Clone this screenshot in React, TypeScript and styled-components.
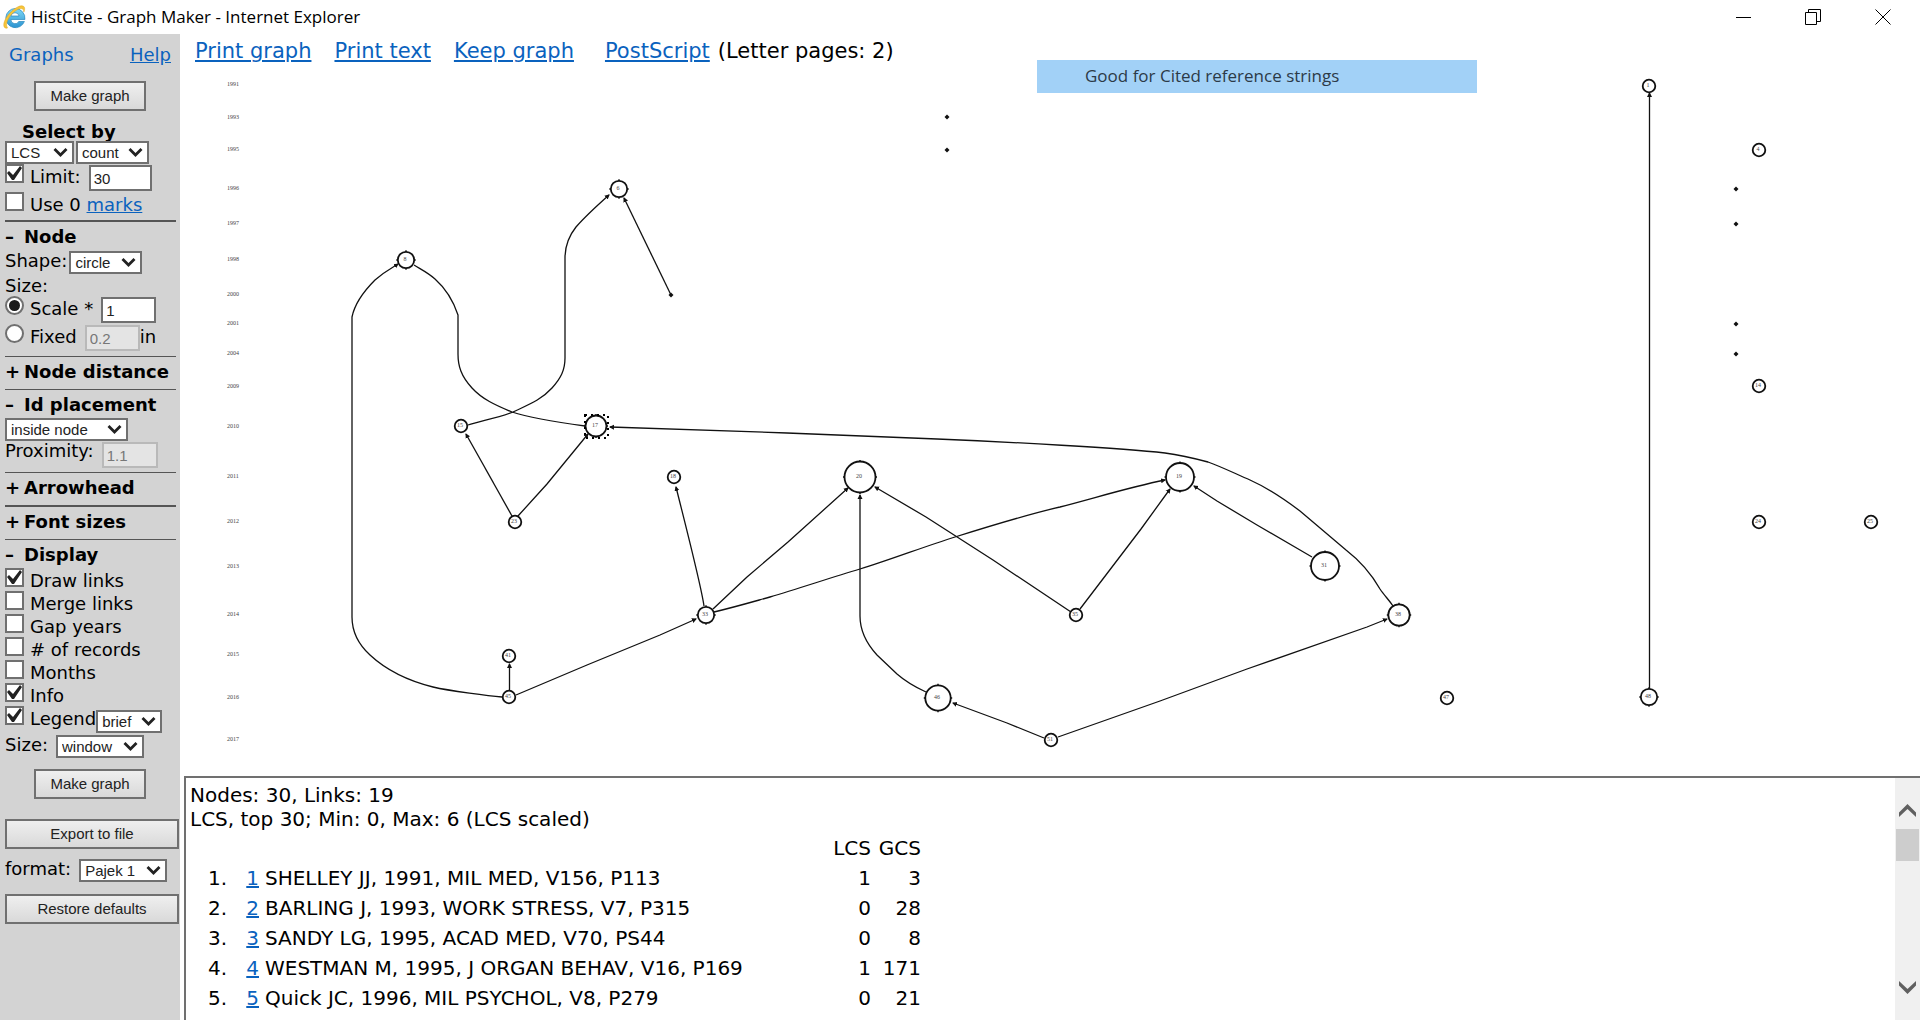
import React from "react";
import styled, { createGlobalStyle, css } from "styled-components";

const sans = `"DejaVu Sans", Verdana, sans-serif`;
const formFont = `"Liberation Sans", Arial, sans-serif`;
const chromeFont = `"Open Sans", "Segoe UI", sans-serif`;
const linkBlue = "#0a62be";
const edge = "#707070";

const GlobalStyle = createGlobalStyle`
  * { box-sizing: border-box; }
  body { margin: 0; background: #fff; color: #000; font-family: ${sans}; }
  a { color: ${linkBlue}; }
`;

const Window = styled.div`
  display: flex;
  flex-direction: column;
  height: 100vh;
  overflow: hidden;
`;

/* ---------- title bar ---------- */

const TitleBar = styled.header`
  display: flex;
  align-items: center;
  height: 34px;
  flex: none;
  padding-left: 3px;
  gap: 5px;
  font-family: ${chromeFont};
`;

const Title = styled.h1`
  flex: 1;
  margin: 0;
  font-size: 17px;
  font-weight: 400;
  line-height: 24px;
`;

const ButtonGroup = styled.div`
  display: flex;
  padding-right: 2px;
`;

const WindowButton = styled.button`
  width: 70px;
  height: 34px;
  padding: 0;
  border: 0;
  background: none;
  display: grid;
  place-items: center;
`;

const Body = styled.div`
  display: flex;
  flex: 1;
  min-height: 0;
`;

/* ---------- sidebar ---------- */

const Sidebar = styled.form`
  width: 180px;
  flex: none;
  padding: 11px 1px 0 5px;
  background: #d3d3d3;
  font-size: 18px;
  line-height: 20px;
`;

const SidebarHead = styled.div`
  display: flex;
  justify-content: space-between;
  padding: 0 8px 0 4px;
  margin-bottom: 16px;
  color: ${linkBlue};
`;

const PushButton = styled.button<{ $wide?: boolean; $top?: number }>`
  display: block;
  width: ${(p) => (p.$wide ? "100%" : "112px")};
  height: 30px;
  margin: ${(p) => p.$top ?? 0}px 0 0 ${(p) => (p.$wide ? 0 : 29)}px;
  padding: 0;
  border: 2px solid ${edge};
  background: linear-gradient(#efefef, #d9d9d9);
  font: 15px/18px ${formFont};
  color: #222;
`;

const GroupTitle = styled.h2`
  margin: 0 0 0 17px;
  padding-top: 11px;
  height: 30px;
  font-size: 18px;
  line-height: 20px;
`;

const Section = styled.section<{ $heavy?: boolean }>`
  margin-right: 3px;
  padding: 5px 0 7px;
  border-top: ${(p) => (p.$heavy ? 2 : 1)}px solid #555;
`;

const OpenSection = styled(Section)`
  padding-bottom: 4px;
`;

const SectionToggle = styled.button`
  display: flex;
  gap: 4px;
  padding: 0;
  border: 0;
  background: none;
  font: bold 18px/20px ${sans};
  color: #000;
  white-space: nowrap;

  span {
    width: 15px;
    text-align: left;
  }
`;

const Row = styled.div<{ $top?: number; $gap?: number; $tall?: boolean }>`
  display: flex;
  align-items: flex-start;
  height: ${(p) => (p.$tall ? 27 : 23)}px;
  margin-top: ${(p) => p.$top ?? 0}px;
  gap: ${(p) => p.$gap ?? 0}px;
`;

const SizeTitle = styled.div`
  padding-top: 2px;
`;

const OptionList = styled.div`
  margin-top: 3px;
`;

const OptionRow = styled.div<{ $tall?: boolean }>`
  display: flex;
  align-items: flex-start;
  height: ${(p) => (p.$tall ? 28 : 23)}px;
  white-space: nowrap;
`;

const OptionLabel = styled.label`
  padding: 3px 0 0 6px;
`;

const mark = css`
  appearance: none;
  flex: none;
  width: 19px;
  height: 19px;
  margin: 0;
  border: 2px solid ${edge};
  background: #fff;
  display: grid;
  place-items: center;
`;

const CheckBox = styled.input.attrs({ type: "checkbox" })`
  ${mark}
  &:checked::after {
    content: "";
    width: 15px;
    height: 15px;
    background: #222;
    clip-path: polygon(0 7px, 2px 5px, 6px 9px, 13px 0, 15px 2px, 7px 14px, 5px 14px);
  }
`;

const Radio = styled.input.attrs({ type: "radio" })`
  ${mark}
  border-radius: 50%;
  &:checked::after {
    content: "";
    width: 11px;
    height: 11px;
    border-radius: 50%;
    background: #1a1a1a;
  }
`;

const Field = styled.input<{ $width: number }>`
  width: ${(p) => p.$width}px;
  height: 26px;
  margin: 1px 0 0 8px;
  padding: 0 3px;
  border: 2px solid ${edge};
  border-radius: 0;
  background: #fff;
  font: 15px/18px ${formFont};
  color: #222;

  &:disabled {
    border-color: #b9b9b9;
    background: #e4e4e4;
    color: #777;
  }
`;

const Unit = styled.span`
  padding-top: 3px;
`;

const SelectBox = styled.span<{ $width: number; $top?: number; $left?: number }>`
  position: relative;
  flex: none;
  width: ${(p) => p.$width}px;
  height: 23px;
  margin: ${(p) => p.$top ?? 0}px 0 0 ${(p) => p.$left ?? 0}px;

  select {
    appearance: none;
    display: block;
    width: 100%;
    height: 23px;
    padding: 0 4px;
    border: 2px solid ${edge};
    border-radius: 0;
    background: #fff;
    font: 15px/18px ${formFont};
    color: #222;
  }

  svg {
    position: absolute;
    right: 6px;
    top: 7px;
    pointer-events: none;
  }
`;

/* ---------- main area ---------- */

const Main = styled.main`
  position: relative;
  flex: 1;
  min-width: 0;
  display: flex;
  flex-direction: column;
`;

const Toolbar = styled.nav`
  display: flex;
  gap: 23px;
  height: 32px;
  flex: none;
  padding: 5px 0 0 15px;
  font-size: 21px;
  line-height: 24px;
  white-space: nowrap;

  a { text-decoration-thickness: 2px; text-underline-offset: 2px; }
`;

const PostScript = styled.span`
  display: flex;
  gap: 8px;
  margin-left: 8px;
`;

const Callout = styled.div`
  position: absolute;
  left: 857px;
  top: 26px;
  width: 440px;
  padding: 4px 48px 5px;
  background: #a2d1f7;
  color: #2c3a47;
  font: 17px/24px ${chromeFont};
  white-space: nowrap;
`;

const Graph = styled.svg`
  display: block;
  flex: 1;
  min-height: 0;
  width: 100%;

  .link { fill: none; stroke: #111; stroke-width: 1.3; }
  .node { fill: #fff; stroke: #111; stroke-width: 1.8; }
  .tick { stroke: #111; stroke-width: 1.4; }
  text { font-family: "Liberation Serif", serif; fill: #444; }
`;

const InfoPanel = styled.section`
  display: flex;
  flex: none;
  height: 244px;
  margin-left: 4px;
  border: solid ${edge};
  border-width: 2px 0 0 2px;
  font-size: 20px;
  line-height: 24px;
`;

const InfoText = styled.div`
  flex: 1;
  overflow: hidden;
  padding: 5px 4px 0;

  p { margin: 0; }
`;

const Records = styled.table`
  margin-top: 2px;
  border-collapse: collapse;
  table-layout: fixed;
  width: 731px;

  th, td { height: 30px; padding: 0; text-align: right; font-weight: 400; white-space: nowrap; }
  td:nth-child(3) { padding-left: 6px; text-align: left; }
`;

const ScrollBar = styled.div`
  display: flex;
  flex-direction: column;
  align-items: center;
  width: 25px;
  background: #f0f0f0;
`;

const ScrollButton = styled.button`
  width: 25px;
  height: 51px;
  flex: none;
  padding: 14px 0 0;
  border: 0;
  background: none;
  display: grid;
  place-items: center;

  &:last-child { padding: 0 0 14px; }
`;

const ScrollThumb = styled.div`
  width: 23px;
  height: 32px;
  margin-bottom: auto;
  background: #cdcdcd;
`;

/* ---------- data ---------- */

type Node = [x: number, y: number, r: number, id: string];

const nodes: Node[] = [
  [1649, 86, 6.3, "1"], [1759, 150, 6.3, "4"], [619, 189, 8.2, "6"], [406, 260, 8.2, "8"],
  [1759, 386, 6.3, "14"], [461, 426, 6.3, "15"], [596, 426, 10.5, "17"], [674, 477, 6.3, "18"],
  [860, 477, 15.5, "20"], [1180, 477, 14, "19"], [515, 522, 6.3, "23"], [1759, 522, 6.3, "24"],
  [1871, 522, 6.3, "25"], [1325, 566, 14, "31"], [706, 615, 8.2, "33"], [1076, 615, 6.3, "35"],
  [1399, 615, 10.7, "38"], [509, 656, 6.3, "41"], [509, 697, 6.3, "45"], [938, 698, 12.7, "46"],
  [1447, 698, 6.3, "47"], [1649, 697, 8.2, "48"], [1051, 740, 6.3, "51"],
];

const dots: [number, number][] = [
  [947, 117], [947, 150], [671, 295], [1736, 189], [1736, 224], [1736, 324], [1736, 354],
];

const years: [string, number][] = [
  ["1991", 84], ["1993", 117], ["1995", 149], ["1996", 188], ["1997", 223], ["1998", 259],
  ["2000", 294], ["2001", 323], ["2004", 353], ["2009", 386], ["2010", 426], ["2011", 476],
  ["2012", 521], ["2013", 566], ["2014", 614], ["2015", 654], ["2016", 697], ["2017", 739],
];

type Link = { d: string; plain?: boolean };

/* Every path starts at the citing node and ends at the tip of its arrow. */
const links: Link[] = [
  { d: "M1649.5 690V93" },
  { d: "M502 697C490 696 450 691 433 687C405 680 384 668 370 655C358 644 352 632 352 617V317C355 302 366 289 375 280C385 271 392 268 398 264" },
  { d: "M585 426C570 424 530 418 512 412C495 405 482 399 472 388C461 376 458 366 458 354V315C453 300 444 287 435 279C427 272 420 269 414 265", plain: true },
  { d: "M468 425C480 421 498 418 513 412C530 404 541 400 552 388C561 378 565 370 565 358V258C565 247 568 237 576 227C583 219 600 203 609 195" },
  { d: "M671 295L624 198" },
  { d: "M512 516L466 434" },
  { d: "M518 516L547 484L588 434" },
  { d: "M1393 606C1389 600 1384 595 1380 589C1372 575 1359 560 1346 550L1300 511C1284 499 1268 488 1250 480C1236 474 1222 467 1208 462C1193 458 1180 455 1165 453C1120 448 1010 442 937 439L787 433L610 427" },
  { d: "M704 606C701 585 688 535 676 487" },
  { d: "M713 609L747 577L788 542L848 488" },
  { d: "M714 612C735 607 752 602 770 597C800 588 830 578 860 569C890 560 923 547 955 537C990 526 1025 515 1060 507C1095 498 1130 487 1165 480" },
  { d: "M926 692C915 687 905 681 897 674L877 655C866 643 860 630 860 616V495" },
  { d: "M1071 612L993 560L926 517L875 487" },
  { d: "M1080 609L1141 529L1170 489" },
  { d: "M1312 557L1257 525L1217 501L1194 486" },
  { d: "M1044 738L1007 723L953 703" },
  { d: "M1058 737L1160 701L1247 669L1367 627L1387 619" },
  { d: "M516 695L587 665L660 635L696 619" },
  { d: "M509.5 690V664" },
];

const records: [number, string, number, number][] = [
  [1, "SHELLEY JJ, 1991, MIL MED, V156, P113", 1, 3],
  [2, "BARLING J, 1993, WORK STRESS, V7, P315", 0, 28],
  [3, "SANDY LG, 1995, ACAD MED, V70, PS44", 0, 8],
  [4, "WESTMAN M, 1995, J ORGAN BEHAV, V16, P169", 1, 171],
  [5, "Quick JC, 1996, MIL PSYCHOL, V8, P279", 0, 21],
];

const displayOptions: [string, string, boolean][] = [
  ["draw", "Draw links", true],
  ["merge", "Merge links", false],
  ["gaps", "Gap years", false],
  ["records", "# of records", false],
  ["months", "Months", false],
  ["info", "Info", true],
];

/* ---------- parts ---------- */

const BrowserLogo = () => (
  <svg width="23" height="25" viewBox="0 0 23 25" aria-hidden="true">
    <defs>
      <linearGradient id="logoBlue" x1="0" y1="0" x2="0" y2="1">
        <stop offset="0" stopColor="#7fd8f5" />
        <stop offset="1" stopColor="#2b93d1" />
      </linearGradient>
    </defs>
    <path d="M12 3.500A9.600 9.600 0 1 0 21.400 16.500H15.800A4.200 4.200 0 0 1 7.900 14.500H21.900A9.800 9.800 0 0 0 12 3.500ZM7.900 11A4.200 4.200 0 0 1 16.100 11Z" fill="url(#logoBlue)" stroke="#2888bd" strokeWidth=".7" fillRule="evenodd" />
    <path d="M4.500 23C.8 24.200 -.8 20 2.800 13.500C6.600 7 14 1 18.400 .8C22 .7 22.300 4 20.800 7C21 4 18.800 2.800 15.500 4.100C8.500 7 .8 18 4.500 23Z" fill="#f7c53a" stroke="#dca522" strokeWidth=".5" />
  </svg>
);

const WindowButtons = () => (
  <ButtonGroup>
    <WindowButton aria-label="Minimize">
      <svg width="15" height="15" viewBox="0 0 15 15"><path d="M0 7.500H15" stroke="#000" /></svg>
    </WindowButton>
    <WindowButton aria-label="Restore">
      <svg width="16" height="16" viewBox="0 0 16 16" fill="none" stroke="#000">
        <path d="M.5 3.500H11.500V15.500H.5ZM3.500 3.500V.5H15.500V12.500H11.500" />
      </svg>
    </WindowButton>
    <WindowButton aria-label="Close">
      <svg width="16" height="16" viewBox="0 0 16 16"><path d="M.5 .5L15.500 15.500M15.500 .5L.5 15.500" stroke="#000" /></svg>
    </WindowButton>
  </ButtonGroup>
);

const Chevron = () => (
  <svg width="15" height="9" viewBox="0 0 15 9" aria-hidden="true">
    <path d="M1.500 1L7.500 7L13.500 1" fill="none" stroke="#222" strokeWidth="2.800" />
  </svg>
);

type DropProps = { id: string; value: string; width: number; top?: number; left?: number; name?: string };

const Drop = ({ id, value, width, top, left, name }: DropProps) => (
  <SelectBox $width={width} $top={top} $left={left}>
    <select id={id} aria-label={name} defaultValue={value}>
      <option value={value}>{value}</option>
    </select>
    <Chevron />
  </SelectBox>
);

const Toggle = ({ open, children }: { open?: boolean; children: React.ReactNode }) => (
  <SectionToggle type="button" aria-expanded={!!open}>
    <span>{open ? "–" : "+"}</span>
    {children}
  </SectionToggle>
);

const Controls = () => (
  <Sidebar onSubmit={(e) => e.preventDefault()}>
    <SidebarHead>
      <span>Graphs</span>
      <a href="#help">Help</a>
    </SidebarHead>
    <PushButton type="button">Make graph</PushButton>
    <GroupTitle>Select by</GroupTitle>
    <Row $gap={2}>
      <Drop id="score" name="Score" value="LCS" width={69} />
      <Drop id="by" name="Select by" value="count" width={73} />
    </Row>
    <OptionRow $tall>
      <CheckBox id="limit" defaultChecked />
      <OptionLabel htmlFor="limit">Limit:</OptionLabel>
      <Field $width={63} aria-label="Limit" defaultValue="30" />
    </OptionRow>
    <OptionRow $tall>
      <CheckBox id="marks" />
      <OptionLabel htmlFor="marks">
        Use 0 <a href="#marks">marks</a>
      </OptionLabel>
    </OptionRow>

    <OpenSection $heavy>
      <Toggle open>Node</Toggle>
      <Row $top={4}>
        <label htmlFor="shape">Shape:</label>
        <Drop id="shape" value="circle" width={73} left={2} />
      </Row>
      <SizeTitle>Size:</SizeTitle>
      <OptionRow $tall>
        <Radio id="scale" name="size" defaultChecked />
        <OptionLabel htmlFor="scale">Scale *</OptionLabel>
        <Field $width={55} aria-label="Scale" defaultValue="1" />
      </OptionRow>
      <OptionRow $tall>
        <Radio id="fixed" name="size" />
        <OptionLabel htmlFor="fixed">Fixed</OptionLabel>
        <Field $width={55} aria-label="Fixed size" defaultValue="0.2" disabled />
        <Unit>in</Unit>
      </OptionRow>
    </OpenSection>

    <Section>
      <Toggle>Node distance</Toggle>
    </Section>

    <OpenSection>
      <Toggle open>Id placement</Toggle>
      <Row $top={3}>
        <Drop id="placement" name="Id placement" value="inside node" width={123} />
      </Row>
      <Row $tall>
        <label htmlFor="proximity">Proximity:</label>
        <Field id="proximity" $width={56} defaultValue="1.1" disabled />
      </Row>
    </OpenSection>

    <Section>
      <Toggle>Arrowhead</Toggle>
    </Section>
    <Section $heavy>
      <Toggle>Font sizes</Toggle>
    </Section>

    <Section>
      <Toggle open>Display</Toggle>
      <OptionList>
        {displayOptions.map(([id, label, on]) => (
          <OptionRow key={id}>
            <CheckBox id={id} defaultChecked={on} />
            <OptionLabel htmlFor={id}>{label}</OptionLabel>
          </OptionRow>
        ))}
        <OptionRow $tall>
          <CheckBox id="legend" defaultChecked />
          <OptionLabel htmlFor="legend">Legend</OptionLabel>
          <Drop id="legendKind" name="Legend kind" value="brief" width={66} top={4} />
        </OptionRow>
      </OptionList>
      <Row $top={1}>
        <label htmlFor="windowSize">Size:</label>
        <Drop id="windowSize" value="window" width={88} left={8} />
      </Row>
    </Section>

    <PushButton type="button" $top={4}>Make graph</PushButton>
    <PushButton type="button" $wide $top={20}>Export to file</PushButton>
    <Row $top={10}>
      <label htmlFor="format">format:</label>
      <Drop id="format" value="Pajek 1" width={88} left={8} />
    </Row>
    <PushButton type="button" $wide $top={12}>Restore defaults</PushButton>
  </Sidebar>
);

const Histograph = () => (
  <Graph viewBox="180 66 1740 710" preserveAspectRatio="xMinYMin meet" role="img" aria-label="Citation graph">
    <defs>
      <marker id="arrow" markerUnits="userSpaceOnUse" markerWidth="6" markerHeight="6" refX="4" refY="3" orient="auto">
        <path d="M0 .5L5 3L0 5.500Z" fill="#111" />
      </marker>
    </defs>
    {years.map(([label, y]) => (
      <text key={label} x="227" y={y + 2} fontSize="6">{label}</text>
    ))}
    {links.map(({ d, plain }) => (
      <path key={d} className="link" d={d} markerEnd={plain ? undefined : "url(#arrow)"} />
    ))}
    {dots.map(([x, y]) => (
      <path key={`${x}-${y}`} d={`M${x - 2.5} ${y}l2.500 -2.500l2.500 2.500l-2.500 2.500z`} fill="#111" />
    ))}
    {nodes.map(([x, y, r, id]) => (
      <g key={id}>
        {r > 7 && (
          <path className="tick" d={`M${x} ${y - r - 1.5}V${y + r + 1.5}M${x - r - 1.5} ${y}H${x + r + 1.5}`} />
        )}
        <circle className="node" cx={x} cy={y} r={r} />
        <text x={x - 1} y={y + 1} fontSize="6" textAnchor="middle">{id}</text>
      </g>
    ))}
    <rect x="585" y="415" width="23" height="23" fill="none" stroke="#000" strokeWidth="2" strokeDasharray="2 4" />
  </Graph>
);

export default function App() {
  return (
    <Window>
      <GlobalStyle />
      <TitleBar>
        <BrowserLogo />
        <Title>HistCite - Graph Maker - Internet Explorer</Title>
        <WindowButtons />
      </TitleBar>
      <Body>
        <Controls />
        <Main>
          <Toolbar>
            <a href="#print-graph">Print graph</a>
            <a href="#print-text">Print text</a>
            <a href="#keep">Keep graph</a>
            <PostScript>
              <a href="#postscript">PostScript</a>
              <span>(Letter pages: 2)</span>
            </PostScript>
          </Toolbar>
          <Histograph />
          <Callout>Good for Cited reference strings</Callout>
          <InfoPanel>
            <InfoText>
              <p>Nodes: 30, Links: 19</p>
              <p>LCS, top 30; Min: 0, Max: 6 (LCS scaled)</p>
              <Records>
                <colgroup>
                  <col width="37" />
                  <col width="32" />
                  <col />
                  <col width="50" />
                  <col width="50" />
                </colgroup>
                <thead>
                  <tr>
                    <th colSpan={3} />
                    <th>LCS</th>
                    <th>GCS</th>
                  </tr>
                </thead>
                <tbody>
                  {records.map(([n, title, lcs, gcs]) => (
                    <tr key={n}>
                      <td>{n}.</td>
                      <td><a href={`#record-${n}`}>{n}</a></td>
                      <td>{title}</td>
                      <td>{lcs}</td>
                      <td>{gcs}</td>
                    </tr>
                  ))}
                </tbody>
              </Records>
            </InfoText>
            <ScrollBar>
              <ScrollButton aria-label="Scroll up">
                <svg width="17" height="13" viewBox="0 0 17 13">
                  <path d="M0 8.500L8.500 0L17 8.500V13L8.500 5L0 13Z" fill="#606060" />
                </svg>
              </ScrollButton>
              <ScrollThumb />
              <ScrollButton aria-label="Scroll down">
                <svg width="17" height="13" viewBox="0 0 17 13">
                  <path d="M0 4.500L8.500 13L17 4.500V0L8.500 8L0 0Z" fill="#606060" />
                </svg>
              </ScrollButton>
            </ScrollBar>
          </InfoPanel>
        </Main>
      </Body>
    </Window>
  );
}
